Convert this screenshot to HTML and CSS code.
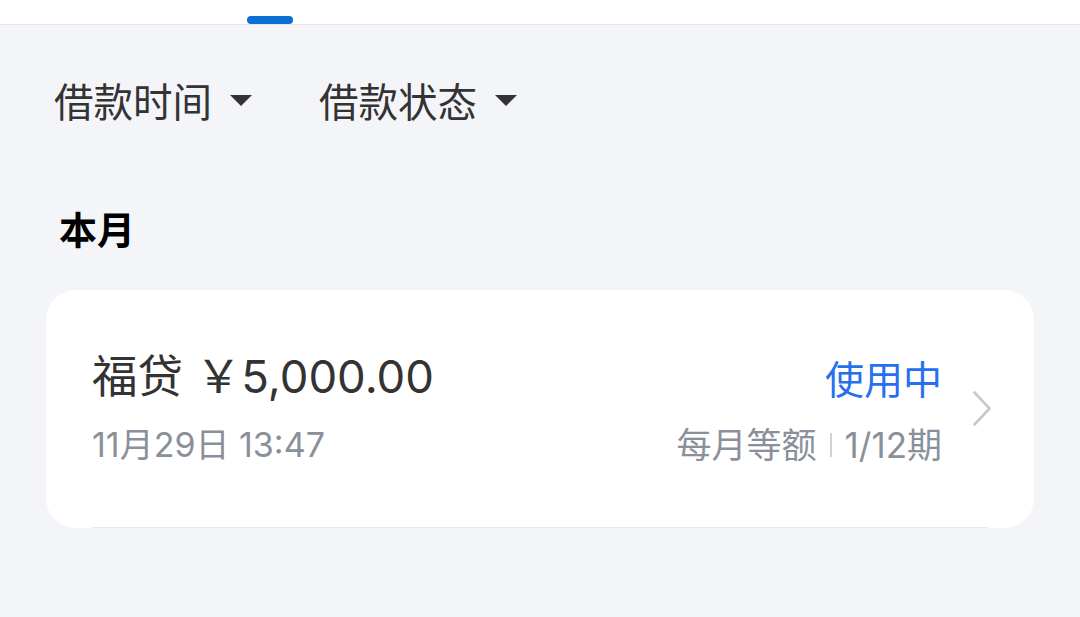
FILE: index.html
```html
<!DOCTYPE html>
<html lang="zh-CN">
<head>
    <meta charset="UTF-8">
    <meta name="viewport" content="width=device-width, initial-scale=1.0">
    <title>借款记录</title>
    <link rel="stylesheet" href="styles.css">
</head>
<body>
    <div class="topbar">
        <span class="tab-indicator"></span>
    </div>

    <div class="filters">
        <div class="filter">借款时间<span class="caret"></span></div>
        <div class="filter">借款状态<span class="caret"></span></div>
    </div>

    <h2 class="month">本月</h2>

    <div class="card">
        <div class="loan">
            <div class="loan-main">
                <div class="loan-title">福贷 ￥5,000.00</div>
                <div class="loan-date">11月29日 13:47</div>
            </div>
            <div class="loan-side">
                <div class="loan-status">使用中</div>
                <div class="loan-plan">每月等额<span class="sep"></span>1/12期</div>
            </div>
            <svg class="chevron" width="18" height="35" viewBox="0 0 18 35">
                <polyline points="1.5,1.5 16.5,17.5 1.5,33.5" fill="none" stroke="#c9c9c9" stroke-width="2.6" stroke-linecap="round" stroke-linejoin="round"/>
            </svg>
        </div>
    </div>
</body>
</html>
```

FILE: styles.css
```css
body {
    margin: 0;
    padding: 0;
    background-color: #f4f5f9;
    font-family: "Noto Sans CJK SC", "Noto Sans", sans-serif;
    color: #333;
    height: 100vh;
    overflow: hidden;
}
.topbar {
    height: 24px;
    background: white;
    border-bottom: 1px solid #e7e7ea;
    display: flex;
    align-items: flex-end;
}
.tab-indicator {
    width: 46px;
    height: 8px;
    margin-left: 247px;
    border-radius: 4px;
    background-color: #0b6fd3;
}
.filters {
    display: flex;
    gap: 67px;
    padding: 47px 0 0 54px;
}
.filter {
    display: flex;
    align-items: center;
    font-size: 39.5px;
    line-height: 56px;
    color: #333;
}
.caret {
    width: 0;
    height: 0;
    margin-left: 18px;
    border-left: 11px solid transparent;
    border-right: 11px solid transparent;
    border-top: 11px solid #333;
}
.month {
    margin: 75px 0 0 59px;
    font-size: 38px;
    line-height: 50px;
    font-weight: bold;
    color: #000;
}
.card {
    margin: 37px 46px 0 46px;
    background: white;
    border-radius: 30px;
    overflow: hidden;
}
/* 一条借款记录，底部分隔线 */
.loan {
    display: flex;
    align-items: center;
    margin: 0 46px;
    height: 237px;
    border-bottom: 1px solid #e8e8ec;
}
.loan-main,
.loan-side {
    align-self: flex-start;
    padding-top: 57px;
}
.loan-main {
    flex: 1;
    font-family: Inter, "Noto Sans CJK SC", sans-serif;
}
.loan-title {
    font-size: 45.5px;
    line-height: 60px;
    color: #333;
}
.loan-date {
    margin-top: 16px;
    font-size: 34px;
    line-height: 44px;
    color: #8a9099;
}
.loan-side {
    display: flex;
    flex-direction: column;
    align-items: flex-end;
}
.loan-status {
    font-size: 39px;
    line-height: 60px;
    color: #2670f0;
}
.loan-plan {
    display: flex;
    align-items: center;
    margin-top: 16px;
    font-family: Inter, "Noto Sans CJK SC", sans-serif;
    font-size: 35px;
    line-height: 44px;
    color: #8a9099;
}
.sep {
    width: 2px;
    height: 24px;
    margin: 0 13px;
    background-color: #cfd2d7;
}
.chevron {
    margin: 0 -3px 0 31px;
}
```
